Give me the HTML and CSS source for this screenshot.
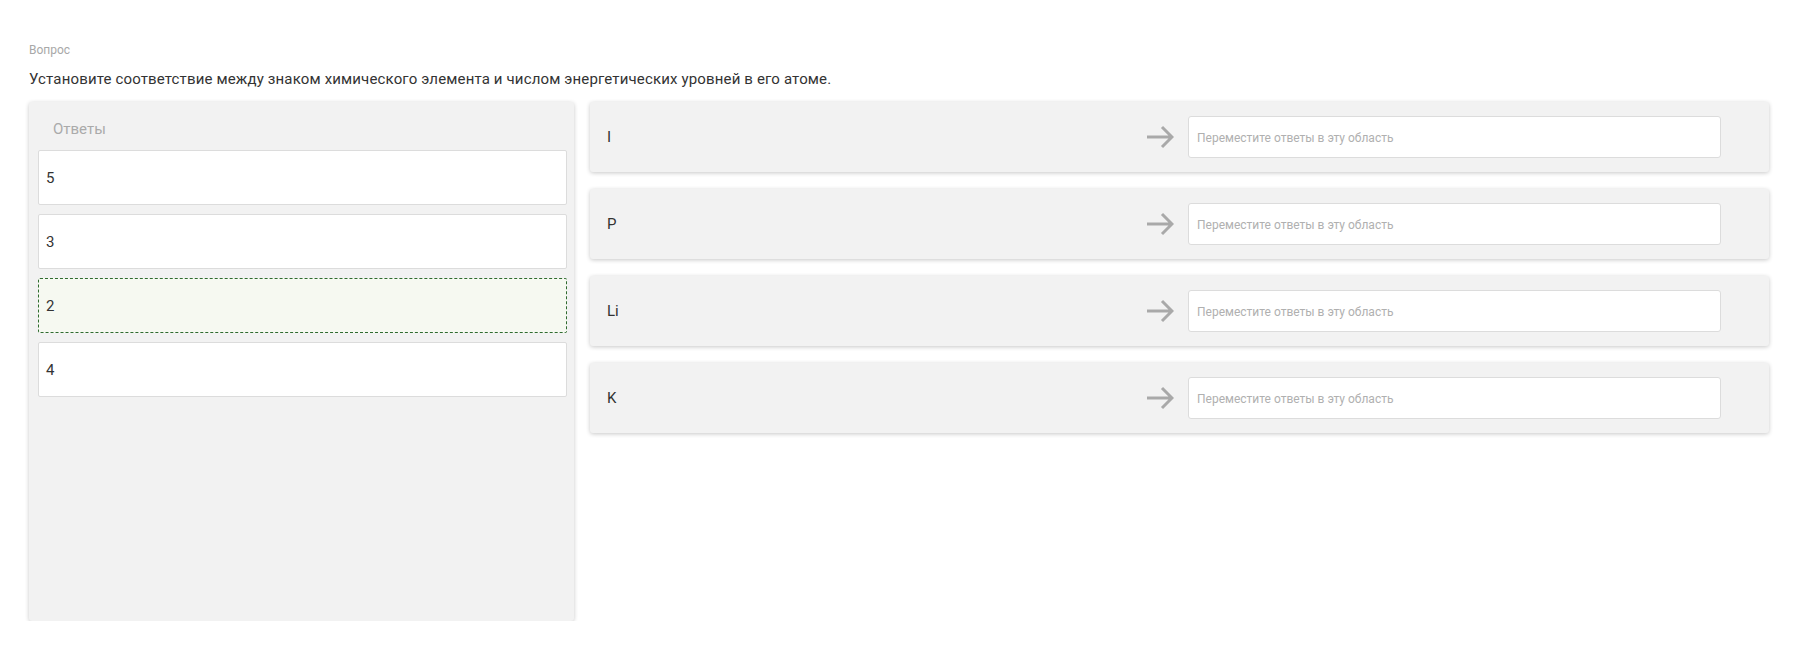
FILE: index.html
```html
<!DOCTYPE html>
<html>
  <head>
    <meta charset="UTF-8">
    <title>Вопрос</title>
    <link rel="stylesheet" href="styles.css">
  </head>
  <body>
    <div class="page">
      <div class="caption">Вопрос</div>
      <p class="question">Установите соответствие между знаком химического элемента и числом энергетических уровней в его атоме.</p>

      <div class="board">
        <div class="answers">
          <div class="answers-title">Ответы</div>
          <div class="answer">5</div>
          <div class="answer">3</div>
          <div class="answer dragging">2</div>
          <div class="answer">4</div>
        </div>

        <div class="targets">
          <div class="target">
            <span class="label">I</span>
            <svg class="arrow" viewBox="0 0 28 24" width="28" height="24"><path d="M1 12H26M16 2L26 12L16 22"/></svg>
            <div class="dropzone">Переместите ответы в эту область</div>
          </div>
          <div class="target">
            <span class="label">P</span>
            <svg class="arrow" viewBox="0 0 28 24" width="28" height="24"><path d="M1 12H26M16 2L26 12L16 22"/></svg>
            <div class="dropzone">Переместите ответы в эту область</div>
          </div>
          <div class="target">
            <span class="label">Li</span>
            <svg class="arrow" viewBox="0 0 28 24" width="28" height="24"><path d="M1 12H26M16 2L26 12L16 22"/></svg>
            <div class="dropzone">Переместите ответы в эту область</div>
          </div>
          <div class="target">
            <span class="label">K</span>
            <svg class="arrow" viewBox="0 0 28 24" width="28" height="24"><path d="M1 12H26M16 2L26 12L16 22"/></svg>
            <div class="dropzone">Переместите ответы в эту область</div>
          </div>
        </div>
      </div>
    </div>
  </body>
</html>
```

FILE: styles.css
```css
body {
  margin: 0;
  background: #fff;
  font-family: Roboto, "Liberation Sans", sans-serif;
  color: #333;
}

.page {
  padding: 42px 45px 0 29px;
}

.caption {
  font-size: 12px;
  line-height: 16px;
  color: #a8a8a8;
  margin-bottom: 11px;
}

.question {
  margin: 0 0 13px;
  font-size: 15px;
  line-height: 20px;
  letter-spacing: 0.15px;
  color: #333;
}

.board {
  display: grid;
  grid-template-columns: 545px 1fr;
  gap: 16px;
  align-items: start;
}

.answers {
  height: 519px;
  box-sizing: border-box;
  background: #f2f2f2;
  border-radius: 3px;
  box-shadow: 0 1px 4px rgba(0, 0, 0, 0.22);
  padding: 17px 7px 0 9px;
  display: flex;
  flex-direction: column;
  gap: 9px;
}

.answers-title {
  font-size: 15px;
  line-height: 20px;
  color: #aaa;
  padding-left: 15px;
  margin-bottom: 2px;
}

.answer {
  height: 55px;
  box-sizing: border-box;
  display: flex;
  align-items: center;
  padding-left: 7px;
  background: #fff;
  border: 1px solid #dcdcdc;
  border-radius: 2px;
  font-size: 15px;
  color: #333;
}

.answer.dragging {
  background: #f6f9f1;
  border: 1px dashed #2f6b2f;
}

.targets {
  display: flex;
  flex-direction: column;
  gap: 17px;
}

.target {
  height: 70px;
  box-sizing: border-box;
  display: flex;
  align-items: center;
  padding: 0 48px 0 17px;
  background: #f2f2f2;
  border-radius: 3px;
  box-shadow: 0 1px 4px rgba(0, 0, 0, 0.22);
}

.label {
  flex: 1;
  font-size: 15px;
  color: #333;
}

.arrow {
  fill: none;
  stroke: #a9a9a9;
  stroke-width: 3;
  margin-right: 14px;
}

.dropzone {
  width: 533px;
  height: 42px;
  box-sizing: border-box;
  display: flex;
  align-items: center;
  padding-left: 8px;
  padding-top: 2px;
  background: #fff;
  border: 1px solid #dcdcdc;
  border-radius: 3px;
  font-size: 12px;
  color: #b0b0b0;
}
```
